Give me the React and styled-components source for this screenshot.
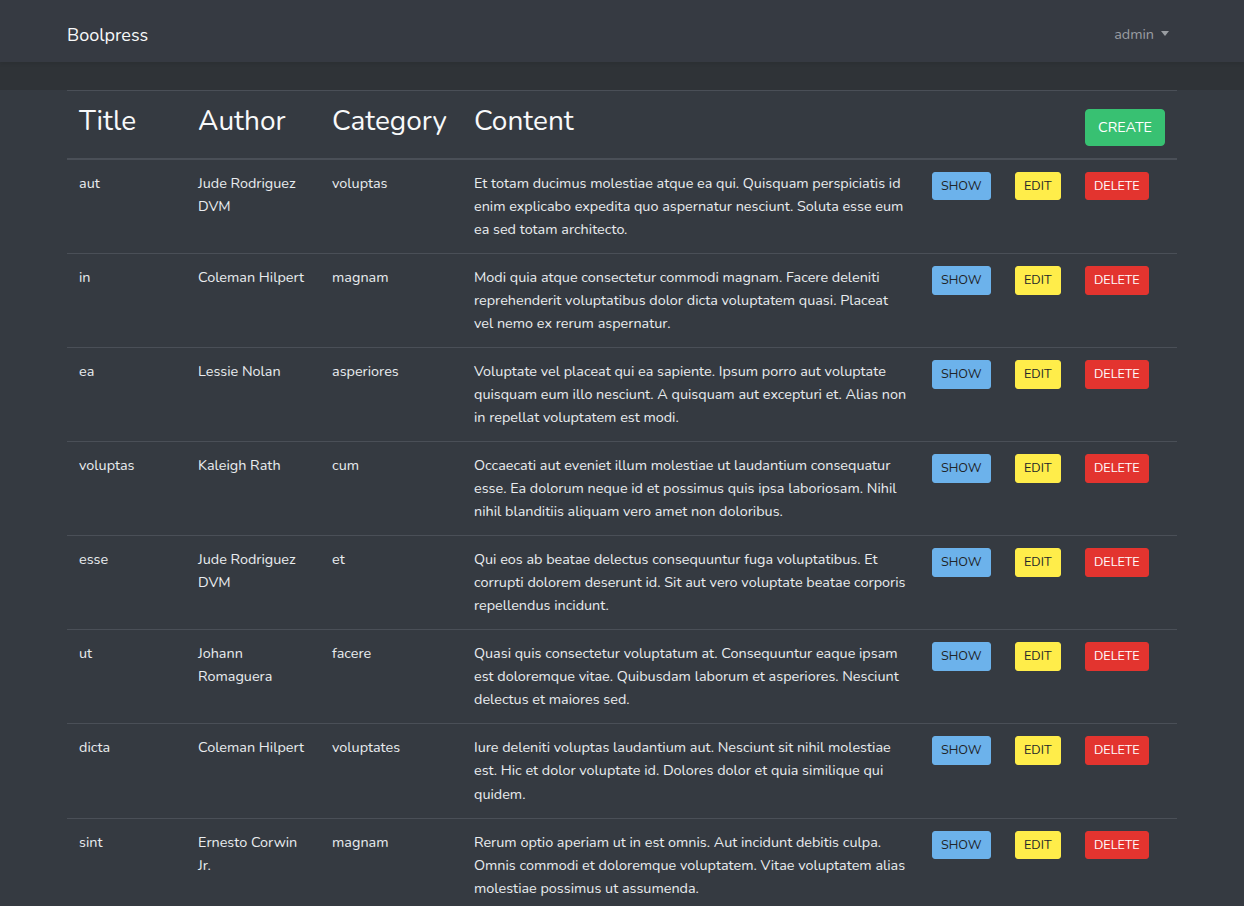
import React from 'react';
import styled, { createGlobalStyle } from 'styled-components';

const GlobalStyle = createGlobalStyle`
  * { box-sizing: border-box; }
  body {
    margin: 0;
    background-color: #2f3337;
    font-family: Nunito, Lato, "Noto Sans", sans-serif;
    font-size: 14.4px;
    line-height: 1.6;
    color: #e9ecef;
  }
`;

const Navbar = styled.nav`
  height: 62px;
  background-color: #363a42;
  box-shadow: 0 2px 4px rgba(0, 0, 0, 0.08);
  position: relative;
  z-index: 1;
`;

const Container = styled.div`
  width: 1140px;
  margin: 0 auto;
  padding: 0 15px;
`;

const NavInner = styled(Container)`
  height: 100%;
  padding-top: 8px;
  display: flex;
  align-items: center;
  justify-content: space-between;
`;

const Brand = styled.a`
  font-size: 18px;
  color: #f8f9fa;
  text-decoration: none;
`;

const UserMenu = styled.a`
  display: flex;
  align-items: center;
  gap: 7px;
  padding: 0 8px;
  color: #9a9da2;
  font-size: 14.4px;
  text-decoration: none;
  &::after {
    content: '';
    border-top: 5px solid #9a9da2;
    border-left: 4.5px solid transparent;
    border-right: 4.5px solid transparent;
    margin-top: -2px;
  }
`;

const Main = styled.main`
  margin-top: 28px;
  background-color: #353a41;
  min-height: 816px;
`;

const Table = styled.table`
  width: 1110px;
  table-layout: fixed;
  border-collapse: collapse;
  color: #e9ecef;
`;

const HeadCell = styled.th`
  padding: 12px;
  text-align: left;
  vertical-align: bottom;
  font-weight: 400;
  border-top: 1px solid #4a4f57;
  border-bottom: 2px solid #4a4f57;
`;

const HeadTitle = styled.h3`
  margin: 2px 0 7px;
  font-size: 28px;
  font-weight: 400;
  line-height: 1.2;
  color: #f8f9fa;
`;

const Cell = styled.td`
  padding: 12px;
  vertical-align: top;
  border-top: 1px solid #4a4f57;
`;

const Line = styled.span`
  display: block;
  white-space: nowrap;
`;

const palette = {
  success: { bg: '#38c172', fg: '#ffffff' },
  info: { bg: '#6cb2eb', fg: '#212529' },
  warning: { bg: '#ffed4a', fg: '#212529' },
  danger: { bg: '#e3342f', fg: '#ffffff' },
};

const Button = styled.button`
  font-family: inherit;
  display: inline-block;
  border: 1px solid ${p => palette[p.variant].bg};
  background-color: ${p => palette[p.variant].bg};
  color: ${p => palette[p.variant].fg};
  text-transform: uppercase;
  cursor: pointer;
  font-size: ${p => (p.small ? '12.6px' : '14.4px')};
  line-height: ${p => (p.small ? 1.5 : 1.6)};
  padding: ${p => (p.small ? '4px 8px' : '6px 12px')};
  border-radius: ${p => (p.small ? '3px' : '4px')};
`;

const posts = [
  { title: 'aut', author: ['Jude Rodriguez', 'DVM'], category: 'voluptas', content: ['Et totam ducimus molestiae atque ea qui. Quisquam perspiciatis id', 'enim explicabo expedita quo aspernatur nesciunt. Soluta esse eum', 'ea sed totam architecto.'] },
  { title: 'in', author: ['Coleman Hilpert'], category: 'magnam', content: ['Modi quia atque consectetur commodi magnam. Facere deleniti', 'reprehenderit voluptatibus dolor dicta voluptatem quasi. Placeat', 'vel nemo ex rerum aspernatur.'] },
  { title: 'ea', author: ['Lessie Nolan'], category: 'asperiores', content: ['Voluptate vel placeat qui ea sapiente. Ipsum porro aut voluptate', 'quisquam eum illo nesciunt. A quisquam aut excepturi et. Alias non', 'in repellat voluptatem est modi.'] },
  { title: 'voluptas', author: ['Kaleigh Rath'], category: 'cum', content: ['Occaecati aut eveniet illum molestiae ut laudantium consequatur', 'esse. Ea dolorum neque id et possimus quis ipsa laboriosam. Nihil', 'nihil blanditiis aliquam vero amet non doloribus.'] },
  { title: 'esse', author: ['Jude Rodriguez', 'DVM'], category: 'et', content: ['Qui eos ab beatae delectus consequuntur fuga voluptatibus. Et', 'corrupti dolorem deserunt id. Sit aut vero voluptate beatae corporis', 'repellendus incidunt.'] },
  { title: 'ut', author: ['Johann', 'Romaguera'], category: 'facere', content: ['Quasi quis consectetur voluptatum at. Consequuntur eaque ipsam', 'est doloremque vitae. Quibusdam laborum et asperiores. Nesciunt', 'delectus et maiores sed.'] },
  { title: 'dicta', author: ['Coleman Hilpert'], category: 'voluptates', content: ['Iure deleniti voluptas laudantium aut. Nesciunt sit nihil molestiae', 'est. Hic et dolor voluptate id. Dolores dolor et quia similique qui', 'quidem.'] },
  { title: 'sint', author: ['Ernesto Corwin', 'Jr.'], category: 'magnam', content: ['Rerum optio aperiam ut in est omnis. Aut incidunt debitis culpa.', 'Omnis commodi et doloremque voluptatem. Vitae voluptatem alias', 'molestiae possimus ut assumenda.'] },
];

const columns = [119, 134, 142, 458, 83, 70, 104];

export default function App() {
  return (
    <>
      <GlobalStyle />
      <Navbar>
        <NavInner>
          <Brand href="#">Boolpress</Brand>
          <UserMenu href="#">admin</UserMenu>
        </NavInner>
      </Navbar>
      <Main>
        <Container>
          <Table>
            <colgroup>
              {columns.map((w, i) => <col key={i} style={{ width: w }} />)}
            </colgroup>
            <thead>
              <tr>
                <HeadCell><HeadTitle>Title</HeadTitle></HeadCell>
                <HeadCell><HeadTitle>Author</HeadTitle></HeadCell>
                <HeadCell><HeadTitle>Category</HeadTitle></HeadCell>
                <HeadCell><HeadTitle>Content</HeadTitle></HeadCell>
                <HeadCell />
                <HeadCell />
                <HeadCell><Button variant="success">Create</Button></HeadCell>
              </tr>
            </thead>
            <tbody>
              {posts.map((post, i) => (
                <tr key={i}>
                  <Cell>{post.title}</Cell>
                  <Cell>{post.author.map((l, j) => <Line key={j}>{l}</Line>)}</Cell>
                  <Cell>{post.category}</Cell>
                  <Cell>{post.content.map((l, j) => <Line key={j}>{l}</Line>)}</Cell>
                  <Cell><Button small variant="info">Show</Button></Cell>
                  <Cell><Button small variant="warning">Edit</Button></Cell>
                  <Cell><Button small variant="danger">Delete</Button></Cell>
                </tr>
              ))}
            </tbody>
          </Table>
        </Container>
      </Main>
    </>
  );
}
